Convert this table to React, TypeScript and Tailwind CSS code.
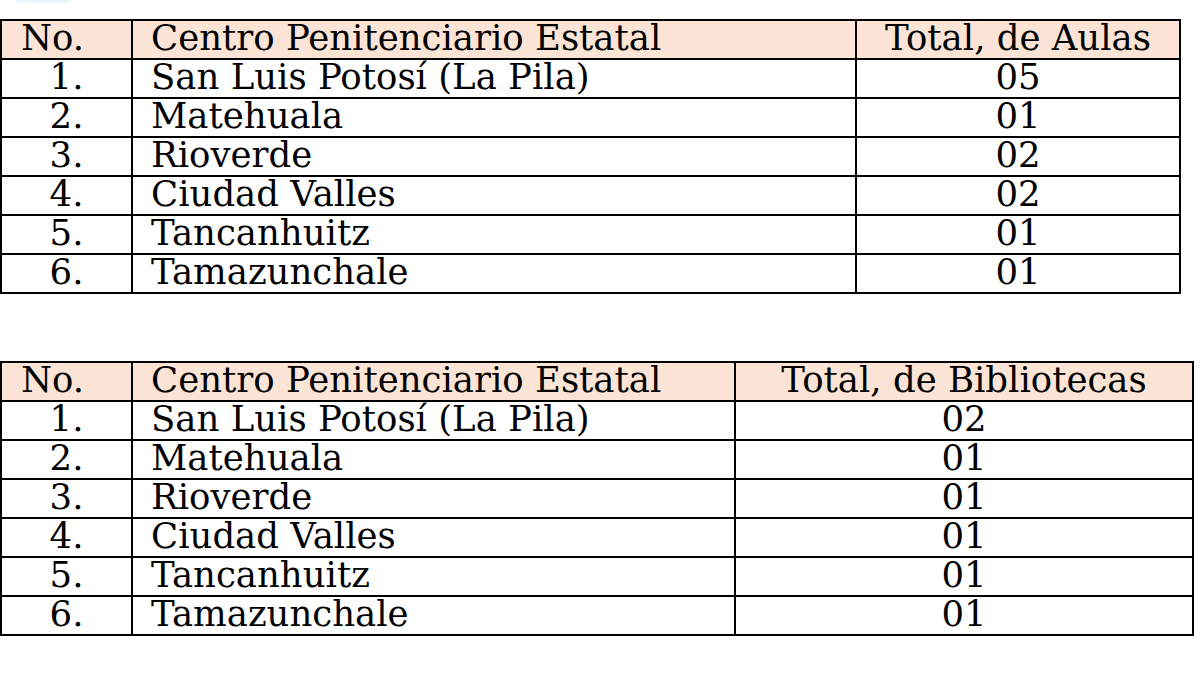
import React from "react";

const places = [
  "San Luis Potosí (La Pila)",
  "Matehuala",
  "Rioverde",
  "Ciudad Valles",
  "Tancanhuitz",
  "Tamazunchale",
];

function Table({
  title,
  values,
  cols,
}: {
  title: string;
  values: string[];
  cols: string;
}) {
  const cell = "h-[39px] border-r-2 border-b-2 border-black leading-[33px] whitespace-nowrap";
  return (
    <div className={`grid ${cols} border-l-2 border-t-2 border-black`}>
      <div className={`${cell} bg-[#fbe4d5] pl-[19px]`}>No.</div>
      <div className={`${cell} bg-[#fbe4d5] pl-[18px]`}>Centro Penitenciario Estatal</div>
      <div className={`${cell} bg-[#fbe4d5] text-center`}>{title}</div>
      {places.map((p, i) => (
        <React.Fragment key={p}>
          <div className={`${cell} text-center`}>{i + 1}.</div>
          <div className={`${cell} pl-[18px]`}>{p}</div>
          <div className={`${cell} text-center`}>{values[i]}</div>
        </React.Fragment>
      ))}
    </div>
  );
}

export default function App() {
  return (
    <div className="w-[1200px] h-[675px] overflow-hidden bg-white text-black font-['DejaVu_Serif',serif] text-[35.5px]">
      <div className="ml-[15px] w-[55px] h-[3px] rounded-b bg-[#ebf7f7]" />
      <div className="mt-[16px] w-[1181px]">
        <Table
          title="Total, de Aulas"
          values={["05", "01", "02", "02", "01", "01"]}
          cols="grid-cols-[131px_724px_324px]"
        />
      </div>
      <div className="mt-[67px] w-[1194px]">
        <Table
          title="Total, de Bibliotecas"
          values={["02", "01", "01", "01", "01", "01"]}
          cols="grid-cols-[131px_603px_458px]"
        />
      </div>
    </div>
  );
}
